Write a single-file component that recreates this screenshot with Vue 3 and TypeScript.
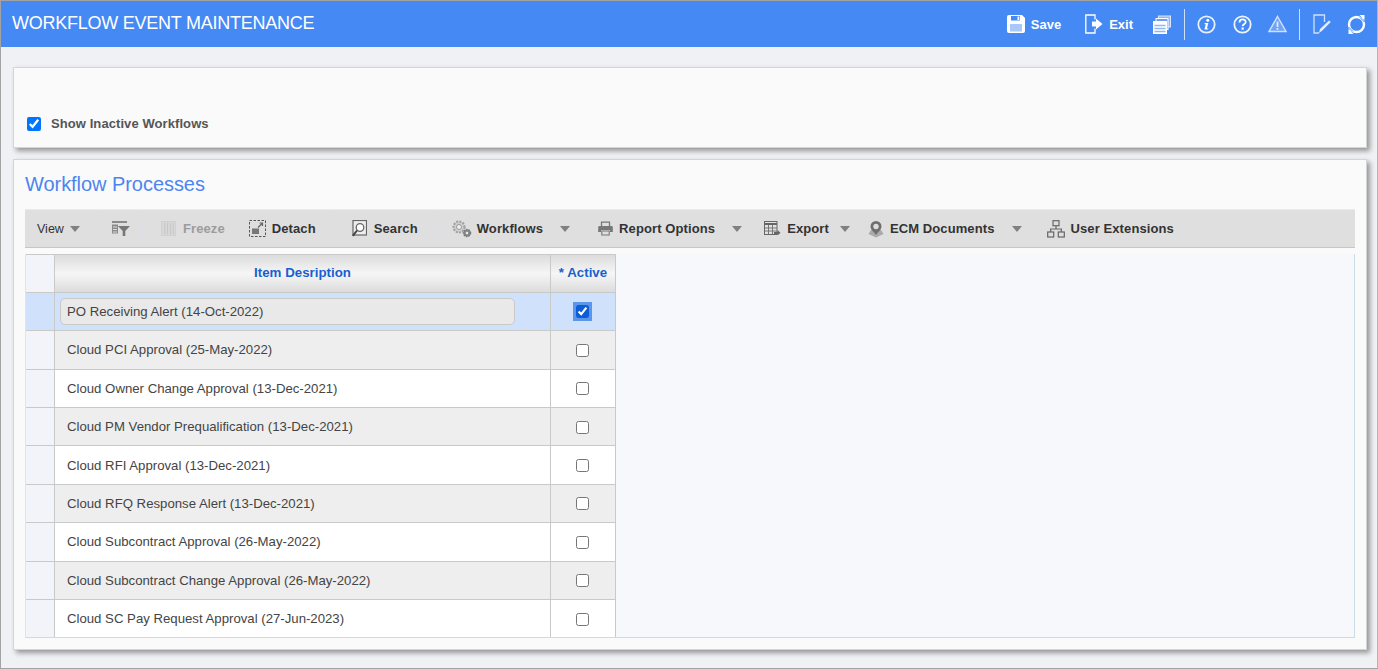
<script setup lang="ts">
const rows: string[] = [
  'PO Receiving Alert (14-Oct-2022)',
  'Cloud PCI Approval (25-May-2022)',
  'Cloud Owner Change Approval (13-Dec-2021)',
  'Cloud PM Vendor Prequalification (13-Dec-2021)',
  'Cloud RFI Approval (13-Dec-2021)',
  'Cloud RFQ Response Alert (13-Dec-2021)',
  'Cloud Subcontract Approval (26-May-2022)',
  'Cloud Subcontract Change Approval (26-May-2022)',
  'Cloud SC Pay Request Approval (27-Jun-2023)'
]
</script>

<template>
  <div class="page">
    <header class="top">
      <h1 class="title">WORKFLOW EVENT MAINTENANCE</h1>
      <div class="actions">
        <span class="act save">
          <svg width="18" height="18" viewBox="0 0 18 18"><path d="M0 2A2 2 0 0 1 2 0H15l3 3v13a2 2 0 0 1-2 2H2a2 2 0 0 1-2-2Z" fill="#fff"/><rect x="4" y="1" width="9" height="4.500" fill="#4589f5"/><rect x="10.500" y="1.500" width="1.800" height="3.500" fill="#fff"/><rect x="3" y="9" width="12" height="7.500" fill="#a9c8fa"/></svg>
          <b>Save</b>
        </span>
        <span class="act exit">
          <svg width="20" height="20" viewBox="0 0 20 20"><path d="M10 5.500V1H.8v18H10v-4.500" fill="none" stroke="#fff" stroke-width="1.300"/><path d="M7 7.500h4V4.500l6.500 5.500-6.500 5.500V12.500H7Z" fill="#fff"/></svg>
          <b>Exit</b>
        </span>
        <svg class="windows" width="18" height="19" viewBox="0 0 18 19"><rect x="5.500" y="1" width="12" height="11" fill="#8fb6f8" stroke="#dbe7fd"/><rect x="3" y="3.500" width="12" height="11" fill="#6e9ff6" stroke="#fff"/><rect x="0" y="6" width="14" height="13" fill="#fff"/><path d="M1.500 10.500h11M1.500 13.500h11M1.500 16.500h11" stroke="#8fb6f8" stroke-width="1.400"/></svg>
        <span class="sep first"></span>
        <svg class="ic info" width="19" height="19" viewBox="0 0 19 19"><circle cx="9.500" cy="9.500" r="8.200" fill="none" stroke="#e6effe" stroke-width="1.800"/><circle cx="10.800" cy="5.200" r="1.500" fill="#fff"/><path d="M7.800 8.100h3.500l-1.400 5.300h1.500l-.3 1.200H7.400l1.400-5.300H7.500Z" fill="#fff"/></svg>
        <svg class="ic help" width="19" height="19" viewBox="0 0 19 19"><circle cx="9.500" cy="9.500" r="8.200" fill="none" stroke="#eef4fe" stroke-width="1.800"/><path d="M6.500 7.400c0-4 6.200-3.900 6.200-.4 0 2.300-3.100 2.300-3.100 4.300" fill="none" stroke="#fff" stroke-width="1.800"/><rect x="8.500" y="12.500" width="2.200" height="2.200" fill="#fff"/></svg>
        <svg class="ic warn" width="19" height="18" viewBox="0 0 19 18"><path d="M9.500 1.500 18 16.500H1Z" fill="#6fa3f7" stroke="#cfe0fc" stroke-width="1.500"/><path d="M9.500 6.500v5.500" stroke="#dfeafd" stroke-width="1.800"/><rect x="8.600" y="13" width="1.800" height="1.800" fill="#dfeafd"/></svg>
        <span class="sep second"></span>
        <svg class="ic note" width="19" height="20" viewBox="0 0 19 20"><path d="M11.500 8V1H1v18h5" fill="none" stroke="#cfe0fc" stroke-width="1.300"/><path d="M6 19l1-4 9-8.500 1.800 1.500-9 9Z" fill="#e6effe"/></svg>
        <svg class="ic refresh" width="19" height="19" viewBox="0 0 19 19"><circle cx="9.500" cy="9.500" r="7.500" fill="none" stroke="#fff" stroke-width="2.400"/><path d="M12.500 0h5v5ZM6.500 19h-5v-5Z" fill="#fff"/><path d="M13 2.500l4.500 4.500M6 16.500 1.500 12" stroke="#4589f5" stroke-width="1"/></svg>
      </div>
    </header>

    <main class="body">
      <section class="card filter">
        <label class="inactive">
          <input type="checkbox" class="native big" checked />
          <span>Show Inactive Workflows</span>
        </label>
      </section>

      <section class="card processes">
        <h2 class="section">Workflow Processes</h2>
        <div class="toolbar">
          <span class="tool view">View<i class="caret"></i></span>
          <span class="div d1"></span>
          <svg class="ti filt" width="20" height="17" viewBox="0 0 20 17"><path d="M1 1h15v2H1ZM1 4.500h6v9H1Z" fill="#8b8b8b"/><path d="M2 7h4M2 9.500h4M2 12h4" stroke="#ddd"/><path d="M7 6h12l-4.700 5v5h-2.600v-5Z" fill="#777"/></svg>
          <span class="div d2"></span>
          <span class="tool freeze">
            <svg class="ti" width="15" height="15" viewBox="0 0 16 16"><rect x="0.500" y="0.500" width="15" height="15" fill="#d8d8d8" stroke="#d0d0d0"/><path d="M4 2v12M7 2v12M10 2v12M13 2v12" stroke="#c4c4c4"/></svg>
            Freeze
          </span>
          <span class="tool detach">
            <svg class="ti" width="17" height="17" viewBox="0 0 17 17"><rect x="0.500" y="0.500" width="16" height="16" fill="none" stroke="#555" stroke-dasharray="2.500 1.500"/><rect x="3" y="8.500" width="7" height="5.500" fill="#777"/><path d="M9 7.500 13.500 3M10.500 3h3v3" fill="none" stroke="#666" stroke-width="1.200"/></svg>
            Detach
          </span>
          <span class="div d3"></span>
          <span class="tool search">
            <svg class="ti" width="15" height="17" viewBox="0 0 15 17"><rect x="1" y="0.500" width="13.500" height="14.500" fill="#eee" stroke="#666" stroke-width="1.200"/><circle cx="8" cy="7.500" r="3.800" fill="#fff" stroke="#666" stroke-width="1.300"/><path d="M5 10.500.8 15.800" stroke="#444" stroke-width="2"/></svg>
            Search
          </span>
          <span class="div d4"></span>
          <span class="tool workflows">
            <svg class="ti" width="20" height="18" viewBox="0 0 20 18"><circle cx="7" cy="7" r="5.500" fill="#cfcfcf" stroke="#a0a0a0" stroke-width="2" stroke-dasharray="2 1.200"/><circle cx="7" cy="7" r="2.500" fill="#f0f0f0" stroke="#999"/><circle cx="15" cy="13" r="3.500" fill="#8a8a8a" stroke="#777" stroke-width="1.500" stroke-dasharray="1.500 1"/><circle cx="15" cy="13" r="1.200" fill="#eee"/></svg>
            Workflows<i class="caret c-wf"></i>
          </span>
          <span class="tool report">
            <svg class="ti" width="15" height="15" viewBox="0 0 15 15"><path d="M3.500 5V1.200h8V5" fill="none" stroke="#777" stroke-width="1.300"/><path d="M1.500 5h12A1.300 1.300 0 0 1 14.800 6.300V11h-2.800V9H3v2H.2V6.300A1.300 1.300 0 0 1 1.500 5Z" fill="#777"/><path d="M3.800 10h7.400v4H3.800Z" fill="none" stroke="#777" stroke-width="1.100"/></svg>
            Report Options<i class="caret c-wide"></i>
          </span>
          <span class="tool export">
            <svg class="ti" width="17" height="15" viewBox="0 0 17 15"><rect x="0.500" y="0.500" width="12.500" height="13" fill="#e2e2e2" stroke="#666"/><path d="M0 3h13" stroke="#666" stroke-width="2"/><path d="M4.500 4v9M8.500 4v9M1 7h12M1 10h12" stroke="#777"/><path d="M10 11h3.500V9l3 2.700-3 2.800v-1.500H10Z" fill="#666"/></svg>
            Export<i class="caret c-ex"></i>
          </span>
          <span class="tool ecm">
            <svg class="ti" width="16" height="18" viewBox="0 0 16 18"><path d="M3 10 0.500 14l7.500 3.500 7.500-3.500L13 10Z" fill="#aaa"/><path d="M8 1a5.500 5.500 0 0 1 5.500 5.500C13.500 10 9.500 12 8 15 6.500 12 2.500 10 2.500 6.500A5.500 5.500 0 0 1 8 1Z" fill="#6f6f6f"/><circle cx="8" cy="6.500" r="2.700" fill="#ddd"/></svg>
            ECM Documents<i class="caret c-wide"></i>
          </span>
          <span class="tool ext">
            <svg class="ti" width="18" height="18" viewBox="0 0 18 18"><rect x="6" y="0.700" width="6" height="5" fill="none" stroke="#666" stroke-width="1.200"/><rect x="0.700" y="12" width="6" height="5" fill="none" stroke="#666" stroke-width="1.200"/><rect x="11.300" y="12" width="6" height="5" fill="none" stroke="#666" stroke-width="1.200"/><path d="M9 5.700V9M3.700 12V9h10.600v3" fill="none" stroke="#666" stroke-width="1.200"/></svg>
            User Extensions
          </span>
        </div>

        <div class="grid-area">
          <div class="grid">
            <div class="head">
              <div class="gutter"></div>
              <div class="hcell item">Item Desription</div>
              <div class="hcell active">* Active</div>
            </div>
            <div
              v-for="(row, i) in rows"
              :key="row"
              class="row"
              :class="{ selected: i === 0, even: i > 0 && i % 2 === 1 }"
            >
              <div class="gutter"></div>
              <div class="cell item">
                <span v-if="i === 0" class="editor">{{ row }}</span>
                <span v-else>{{ row }}</span>
              </div>
              <div class="cell active">
                <span v-if="i === 0" class="focus"><input type="checkbox" class="native dark" checked /></span>
                <input v-else type="checkbox" class="native plain" />
              </div>
            </div>
          </div>
        </div>
      </section>
    </main>
  </div>
</template>

<style>
html, body { margin: 0; padding: 0; background: #f0f1f4; }
</style>

<style scoped>
.page {
  box-sizing: border-box;
  width: 1378px;
  height: 669px;
  border: 1px solid #a3a3a3;
  border-right-color: #b4b4b4;
  background: #f0f1f4;
  font-family: "Liberation Sans", Arial, sans-serif;
  overflow: hidden;
}
.top {
  height: 46px;
  background: #4589f5;
  display: flex;
  align-items: center;
  justify-content: space-between;
}
.title {
  margin: 0 0 2px 11px;
  font-size: 18px;
  font-weight: 400;
  color: #fff;
  letter-spacing: -0.25px;
}
.actions { display: flex; align-items: center; height: 46px; }
.act { display: flex; align-items: center; color: #fff; font-size: 13px; }
.act b { font-weight: 700; }
.save { gap: 6px; }
.exit { gap: 4px; margin-left: 24px; }
.windows { margin-left: 20px; }
.sep { width: 1px; height: 31px; background: #cfe0fc; }
.sep.first { margin-left: 13px; }
.ic { flex: none; }
.info { margin-left: 12px; }
.help { margin-left: 17px; }
.warn { margin-left: 16px; }
.sep.second { margin-left: 12px; }
.note { margin-left: 13px; }
.refresh { margin-left: 15px; margin-right: 11px; }

.body { padding: 20px 10px 0 12px; }
.card {
  box-sizing: border-box;
  width: 1354px;
  background: #fafafa;
  border: 1px solid #d4d5d8;
  box-shadow: 3px 3px 5px rgba(0, 0, 0, 0.38);
}
.filter {
  height: 81px;
  display: flex;
  align-items: flex-end;
  padding: 0 0 15px 13px;
}
.inactive {
  display: flex;
  align-items: center;
  gap: 11px;
  color: #555;
  font-size: 13px;
  font-weight: 700;
  line-height: 16px;
  letter-spacing: 0.08px;
}
.native { margin: 0; width: 13px; height: 13px; flex: none; }
.native.big { width: 14px; height: 14px; margin-right: -1px; }
.processes { margin-top: 11px; height: 491px; padding: 0 11px; }
.section {
  margin: 0;
  box-sizing: border-box;
  height: 49px;
  padding-top: 12px;
  font-size: 20px;
  line-height: 24px;
  font-weight: 400;
  color: #4d85f0;
  letter-spacing: -0.05px;
}
.toolbar {
  height: 39px;
  box-sizing: border-box;
  background: #dfdfdf;
  border-bottom: 1px solid #c6c6c6;
  border-top: 1px solid #e3ecf8;
  display: flex;
  align-items: center;
  padding-left: 12px;
  font-size: 13px;
  font-weight: 700;
  color: #333;
  white-space: nowrap;
  letter-spacing: 0.1px;
}
.tool { display: flex; align-items: center; }
.ti { flex: none; }
.view { font-weight: 400; font-size: 12.500px; width: 60px; letter-spacing: 0; }
.caret {
  display: inline-block;
  width: 0; height: 0;
  border-left: 5px solid transparent;
  border-right: 5px solid transparent;
  border-top: 6px solid #808080;
  margin-left: 6px;
  margin-top: 1px;
}
.caret.c-wf { margin-left: 12px; }
.caret.c-wide { margin-left: 11px; }
.caret.c-ex { margin-left: 5px; }
.div { width: 1px; height: 32px; background: #dde1e6; flex: none; }
.filt { margin-left: 13px; }
.d2 { margin-left: 11px; }
.freeze { margin-left: 18px; color: #9c9c9c; gap: 7px; }
.detach { margin-left: 24px; gap: 6px; }
.d3 { margin-left: 17px; }
.search { margin-left: 18px; gap: 7px; }
.d4 { margin-left: 18px; }
.workflows { margin-left: 15px; gap: 5px; }
.report { margin-left: 28px; gap: 6px; }
.export { margin-left: 22px; gap: 6px; }
.ecm { margin-left: 18px; gap: 6px; }
.ext { margin-left: 25px; gap: 6px; }

.grid-area {
  margin-top: 6px;
  height: 383px;
  background: #f7f8fc;
  border: 1px solid #ccdce4;
  border-top: 0;
  border-left-color: #dfe3ea;
  overflow: hidden;
}
.grid { width: 590px; font-size: 13.200px; color: #444; }
.head, .row { display: flex; box-sizing: border-box; }
.head { height: 38px; border-top: 1px solid #c9c9c9; }
.row { height: 38.400px; border-top: 1px solid #c9c9c9; }
.row.selected { height: 38.200px; }
.gutter {
  width: 28px;
  flex: none;
  background: #f3f4f9;
  border-right: 1px solid #c9c9c9;
}
.hcell {
  display: flex;
  align-items: center;
  justify-content: center;
  padding-bottom: 2px;
  font-weight: 700;
  font-size: 13.300px;
  color: #1a5fcf;
  background: linear-gradient(#dcdcdc, #f6f6f6 50%, #dcdcdc);
}
.item { width: 496px; flex: none; box-sizing: border-box; border-right: 1px solid #c9c9c9; }
.active { width: 65px; flex: none; box-sizing: border-box; border-right: 1px solid #c9c9c9; }
.cell { display: flex; align-items: center; background: #fff; }
.cell.item { padding-left: 12px; }
.row.even .cell { background: #eee; }
.row.selected .cell, .row.selected .gutter { background: #d0e1fb; }
.cell.active { justify-content: center; padding-right: 2px; }
.cell.item .editor {
  box-sizing: border-box;
  width: 455px;
  height: 27px;
  margin-left: -7px;
  padding-left: 6px;
  display: flex;
  align-items: center;
  background: #e9e9e9;
  border: 1px solid #c9c9c9;
  border-radius: 5px;
}
.focus {
  width: 19px;
  height: 19px;
  background: #5b96ea;
  display: flex;
  align-items: center;
  justify-content: center;
}
.native.dark { accent-color: #0b5ed7; }
.plain { width: 13px; height: 13px; position: relative; top: 0.5px; }
</style>
